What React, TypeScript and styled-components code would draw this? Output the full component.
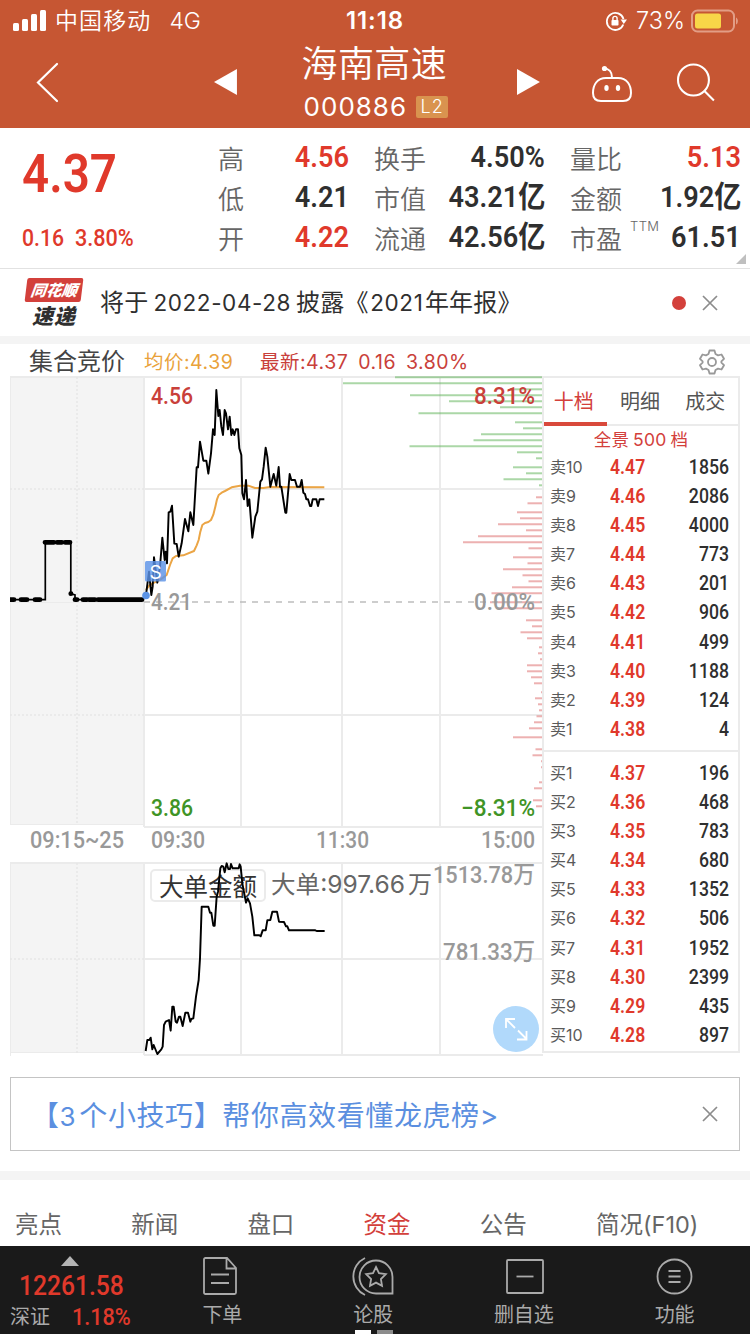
import React from "react";
import styled, { createGlobalStyle } from "styled-components";

const RED = "#e0392b";
const DARK = "#2f2f2f";
const LINE = "#ebebeb";
const CN = `Inter, "Noto Sans CJK SC", sans-serif`;
const DIN = `Roboto, "Noto Sans CJK SC", sans-serif`;

const GlobalStyle = createGlobalStyle`
  * { box-sizing: border-box; }
  body { margin: 0; background: #fff; }
`;

const Page = styled.div`
  width: 750px;
  height: 1334px;
  overflow: hidden;
  display: flex;
  flex-direction: column;
  background: #fff;
  color: ${DARK};
  font-family: ${CN};
  white-space: nowrap;
`;

/* condensed figures used for every quote value */
const Num = styled.span<{ $size: number; $color?: string; $from?: string; $weight?: number; $sx?: number }>`
  display: inline-block;
  font-family: ${DIN};
  font-weight: ${(p) => p.$weight ?? 500};
  font-size: ${(p) => p.$size}px;
  color: ${(p) => p.$color ?? DARK};
  transform: scaleX(${(p) => p.$sx ?? 0.92});
  transform-origin: ${(p) => p.$from ?? "left"} center;
`;

/* ---------- header ---------- */
const Header = styled.header`
  height: 128px;
  flex: none;
  background: #c65633;
  color: #fff;
`;
const StatusBar = styled.div`
  height: 40px;
  display: grid;
  grid-template-columns: 1fr auto 1fr;
  align-items: center;
  padding: 0 11px 0 13px;
  font-size: 23px;
  line-height: 42px;
`;
const Carrier = styled.div`
  display: flex;
  align-items: center;
  gap: 8px;
  letter-spacing: 1.1px;
  font-weight: 350;
`;
const Network = styled.span`
  margin-left: 10px;
  letter-spacing: 0;
`;
const Clock = styled.div`
  padding-right: 2px;
  font-weight: 600;
  font-size: 24px;
  letter-spacing: 0.9px;
`;
const BatteryArea = styled.div`
  display: flex;
  align-items: center;
  justify-content: flex-end;
  gap: 6px;
  font-weight: 350;
`;
const Percent = styled.span`
  margin-left: 3px;
  font-size: 23.5px;
`;
const NavBar = styled.div`
  height: 88px;
  display: flex;
  align-items: center;
  padding: 0 34px 4px 36px;
`;
const Title = styled.div`
  width: 148px;
  margin: 5px 67px 0 64px;
  display: flex;
  flex-direction: column;
  align-items: center;
`;
const StockName = styled.div`
  padding-right: 2px;
  font-size: 36px;
  line-height: 44px;
  letter-spacing: 0.4px;
  font-weight: 350;
`;
const CodeLine = styled.div`
  display: flex;
  align-items: center;
  gap: 9px;
  margin-right: -1px;
  font-size: 26px;
  line-height: 42px;
  letter-spacing: 1px;
`;
const Level = styled.span`
  width: 32px;
  height: 22px;
  margin-top: 1px;
  border-radius: 2px;
  background: #d9934f;
  font-size: 18px;
  font-weight: 350;
  line-height: 22px;
  text-align: center;
`;
const BackSlot = styled.div`
  width: 177px;
  display: flex;
`;
const RobotSlot = styled.div`
  margin: 4px 43px 0 50px;
  display: flex;
`;

/* ---------- quote ---------- */
const Quote = styled.section`
  position: relative;
  height: 141px;
  flex: none;
  display: flex;
  border-bottom: 1px solid #e2e2e2;
`;
const Last = styled.div`
  width: 218px;
  flex: none;
  padding: 16px 0 0 22px;
`;
const LastPrice = styled.div`
  height: 60px;
  line-height: 60px;
`;
const Change = styled.div`
  margin-top: 15px;
  display: flex;
  height: 40px;
  line-height: 40px;
`;
const ChangeValue = styled.div`
  width: 53px;
`;
const Figures = styled.div<{ $w: number }>`
  width: ${(p) => p.$w}px;
  flex: none;
  margin-right: 25px;
  padding-top: 9px;
`;
const Figure = styled.div`
  height: 40px;
  display: flex;
  justify-content: space-between;
  line-height: 40px;
`;
const Label = styled.span`
  font-size: 26px;
  color: #666;
  font-weight: 350;
  padding-top: 3px;
`;
const Ttm = styled.sup`
  display: inline-block;
  vertical-align: top;
  width: 0;
  margin: -14px 0 0 8px;
  font-size: 13px;
  letter-spacing: 0.4px;
`;
const Corner = styled.span`
  position: absolute;
  right: 4px;
  bottom: 4px;
  border: 5px solid transparent;
  border-right-color: #bfbfbf;
  border-bottom-color: #bfbfbf;
`;

/* ---------- notice ---------- */
const Notice = styled.section`
  height: 67px;
  flex: none;
  display: flex;
  align-items: center;
  padding: 0 31px 0 24px;
`;
const Brand = styled.div`
  width: 60px;
  margin-right: 16px;
  display: flex;
  flex-direction: column;
  align-items: center;
  font-family: "Noto Sans CJK SC", sans-serif;
  font-style: italic;
  font-weight: 900;
`;
const BrandTop = styled.div`
  width: 56px;
  height: 24px;
  border-radius: 2px;
  transform: skewX(-7deg);
  background: #d3403b;
  color: #fff;
  font-size: 15.5px;
  line-height: 23px;
  text-align: center;
`;
const BrandBottom = styled.div`
  margin-top: 1px;
  font-size: 21px;
  line-height: 24px;
  letter-spacing: 1px;
`;
const NoticeText = styled.div`
  flex: 1;
  font-size: 24px;
  line-height: 40px;
  letter-spacing: 0.2px;
`;
const Digits = styled.span<{ $gap: number }>`
  margin: 0 ${(p) => p.$gap}px;
  font-size: 22.5px;
  letter-spacing: 0.6px;
`;
const Dot = styled.span`
  width: 14px;
  height: 14px;
  margin-right: 15px;
  border-radius: 50%;
  background: #d3403b;
`;
const Band = styled.div<{ $h: number }>`
  height: ${(p) => p.$h}px;
  flex: none;
  background: #f4f4f4;
`;

/* ---------- chart ---------- */
const ChartHead = styled.div`
  height: 32px;
  flex: none;
  display: flex;
  align-items: center;
  padding: 4px 25px 0 29px;
  font-size: 19.5px;
  line-height: 32px;
`;
const Auction = styled.span`
  width: 115px;
  font-size: 24px;
  color: #444;
`;
const Average = styled.span`
  width: 116px;
  color: #e9a23b;
  letter-spacing: 0.5px;
`;
const Newest = styled.span`
  flex: 1;
  color: #c9403a;
  letter-spacing: 0.5px;
  word-spacing: 4px;
`;
const Market = styled.section`
  height: 701px;
  flex: none;
  display: flex;
  padding-left: 10px;
`;
const ChartWrap = styled.div`
  width: 532px;
  height: 682px;
`;
const Book = styled.aside`
  width: 198px;
  height: 677px;
  border: 2px solid ${LINE};
`;
const BookTabs = styled.div`
  height: 48px;
  display: flex;
  border-bottom: 2px solid ${LINE};
`;
const BookTab = styled.div<{ $on?: boolean }>`
  width: ${(p) => (p.$on ? 64 : 66)}px;
  height: 48px;
  padding-right: ${(p) => (p.$on ? 4 : 0)}px;
  text-align: center;
  font-size: 20px;
  line-height: 48px;
  color: ${(p) => (p.$on ? "#d3403b" : "#555")};
  box-shadow: ${(p) => (p.$on ? "inset 0 -4px #d9493b" : "none")};
`;
const Panorama = styled.div`
  height: 27px;
  text-align: center;
  font-size: 17.5px;
  line-height: 28px;
  letter-spacing: 0.3px;
  word-spacing: -1.5px;
  color: #d3403b;
`;
const Levels = styled.div<{ $rule?: boolean }>`
  padding-bottom: ${(p) => (p.$rule ? 6 : 0)}px;
  margin-bottom: ${(p) => (p.$rule ? 7 : 0)}px;
  border-bottom: ${(p) => (p.$rule ? `2px solid ${LINE}` : "none")};
`;
const LevelRow = styled.div`
  height: 29.1px;
  display: grid;
  grid-template-columns: 60px 50px 1fr;
  padding: 0 9px 0 6px;
  line-height: 29px;
  text-align: right;
`;
const Side = styled.span`
  font-size: 16px;
  color: #5a5a5a;
  text-align: left;
`;
const PriceCell = styled.span`
  text-align: left;
`;

/* ---------- lower area ---------- */
const Banner = styled.section`
  height: 74px;
  flex: none;
  margin: 0 10px 20px;
  padding: 0 20px 0 20px;
  display: flex;
  align-items: center;
  justify-content: space-between;
  border: 1px solid #c4c4c4;
  color: #5b8fe0;
  font-size: 28px;
  letter-spacing: 0.6px;
`;
const BannerDigit = styled.span`
  margin: 0 3px 0 0;
  font-size: 26px;
`;
const Tabs = styled.nav`
  height: 66px;
  flex: none;
  display: flex;
  padding: 12px 0 0 15px;
  line-height: 66px;
  font-size: 23.5px;
`;
const Tab = styled.span<{ $on?: boolean }>`
  width: 116.2px;
  color: ${(p) => (p.$on ? "#d3403b" : "#666")};
`;
const Footer = styled.footer`
  position: relative;
  height: 88px;
  flex: none;
  display: flex;
  background: #1a1a1a;
  color: #aaa;
`;
const IndexBox = styled.div`
  width: 147px;
  padding: 10px 0 0 10px;
`;
const IndexArrow = styled.div`
  width: 0;
  margin-left: 51px;
  border: 9px solid transparent;
  border-top: 0;
  border-bottom: 10px solid #b4b4b4;
`;
const IndexValue = styled.div`
  height: 34px;
  margin: 3px 0 0 9px;
  line-height: 34px;
`;
const IndexRow = styled.div`
  display: flex;
  gap: 22px;
  font-size: 20px;
  line-height: 28px;
`;
const Action = styled.div`
  flex: 1;
  display: flex;
  flex-direction: column;
  align-items: center;
  padding-top: 9px;
  font-size: 20px;
  line-height: 30px;
`;
const ActionIcon = styled.svg`
  width: 44px;
  height: 42px;
  margin-bottom: 3px;
  fill: none;
  stroke: #aaa;
  stroke-width: 1.8;
`;
const Pager = styled.div`
  position: absolute;
  left: 355px;
  bottom: 0;
  display: flex;
  gap: 6px;
`;
const PagerDot = styled.span<{ $on?: boolean }>`
  width: 16px;
  height: 4px;
  background: ${(p) => (p.$on ? "#fff" : "#8c8c8c")};
`;

const Cross = () => (
  <svg width="18" height="18" viewBox="0 0 18 18" stroke="#8c8c8c" strokeWidth="1.7" fill="none">
    <path d="M2 2L16 16M16 2L2 16" />
  </svg>
);

const figures: { w: number; rows: [React.ReactNode, string, boolean][] }[] = [
  { w: 131, rows: [["高", "4.56", true], ["低", "4.21", false], ["开", "4.22", true]] },
  { w: 171, rows: [["换手", "4.50%", false], ["市值", "43.21亿", false], ["流通", "42.56亿", false]] },
  { w: 171, rows: [["量比", "5.13", true], ["金额", "1.92亿", false], [<>市盈<Ttm>TTM</Ttm></>, "61.51", false]] },
];

const sells: [string, string, string][] = [
  ["卖10", "4.47", "1856"], ["卖9", "4.46", "2086"], ["卖8", "4.45", "4000"], ["卖7", "4.44", "773"],
  ["卖6", "4.43", "201"], ["卖5", "4.42", "906"], ["卖4", "4.41", "499"], ["卖3", "4.40", "1188"],
  ["卖2", "4.39", "124"], ["卖1", "4.38", "4"],
];
const buys: [string, string, string][] = [
  ["买1", "4.37", "196"], ["买2", "4.36", "468"], ["买3", "4.35", "783"], ["买4", "4.34", "680"],
  ["买5", "4.33", "1352"], ["买6", "4.32", "506"], ["买7", "4.31", "1952"], ["买8", "4.30", "2399"],
  ["买9", "4.29", "435"], ["买10", "4.28", "897"],
];

/* resting orders by price level: [y, left edge] in chart units */
const greenBars = [
  [377.3, 395], [383.3, 343], [389.3, 510], [395.3, 410], [401.3, 449], [407.3, 500], [413.3, 418.5],
  [422.3, 515], [428.3, 523], [434.3, 481], [440.3, 473.5], [446.3, 409.5], [452.3, 517], [458.3, 536],
  [467.3, 513], [473.3, 526], [479.3, 503.5], [485.3, 539],
];
const redBars = [
  [497.3, 536], [503.3, 527.5], [512.3, 517], [518.3, 520], [524.3, 498], [530.3, 526], [536.3, 478],
  [542.3, 463], [548.3, 528.5], [557.3, 513], [563.3, 527.5], [569.3, 503], [575.3, 522.5], [581.3, 528.5],
  [587.3, 512], [593.3, 491.5], [602.3, 490], [608.3, 497], [620.3, 526], [626.3, 532], [632.3, 520.5],
  [638.3, 527], [647.3, 539], [653.3, 538], [659.3, 540], [665.3, 527], [671.3, 527], [677.3, 531],
  [683.3, 534], [692.3, 541], [698.3, 535], [704.3, 538], [710.3, 539], [716.3, 536.5], [722.3, 534],
  [728.3, 529], [737.3, 513], [749.3, 535.5], [755.3, 532.5], [761.3, 541], [767.3, 541], [782.3, 539],
  [788.3, 534], [800.3, 533], [806.3, 536],
];

const pricePts =
  "18,675 27,605 34,675 38,650 42,562 52,638 60,590 67,503 74,570 77,545 81,580 86,427 91,425 96,407 103,521 110,522 116,560 125,520 135,447 145,484 151,427 160,465 170,292 174,292 180,215 190,272 199,272 205,311 213,250 219,178 224,195 229,60 235,138 239,120 244,170 249,195 254,120 258,130 264,178 269,140 274,195 278,178 283,195 288,178 294,178 298,235 304,255 307,370 312,388 318,330 323,408 328,388 337,503 346,440 352,425 361,335 366,328 371,290 377,233 382,260 391,350 401,312 409,347 416,291 420,350 424,350 436,428 439,428 449,312 454,330 465,330 471,350 480,350 485,330 490,368 495,372 499,388 504,388 510,408 514,408 518,388 529,388 534,408 539,388 553,388";
const averagePts =
  "18,660 28,646 42,638 62,628 80,615 90,585 98,565 108,558 130,556 162,543 170,526 176,510 181,485 187,465 195,459 205,456 213,450 220,434 226,410 231,388 236,375 245,368 255,363 275,352 300,347 325,347 345,354 370,354 390,351 553,352";
const flowPts =
  "437,693 442,660 448,660 452,653 457,688 461,675 472,702 484,688 488,680 492,615 497,605 507,600 512,632 517,560 521,560 527,605 531,608 537,590 541,590 548,618 556,578 564,578 571,605 574,597 580,595 588,530 596,480 600,415 605,260 625,260 630,278 634,278 640,317 644,317 650,230 654,215 661,145 665,138 670,140 674,157 680,130 685,147 690,147 693,132 698,145 716,145 719,133 722,140 727,190 738,248 743,235 750,250 757,290 763,346 778,346 782,349 788,331 797,331 802,301 811,300 817,275 831,275 837,305 852,306 858,319 862,319 867,331 946,331 950,333 974,333";

type AxisProps = { x: number; y: number; w: number; fill: string; size?: number; weight?: number; family?: string; children: React.ReactNode };
const Axis = ({ x, y, w, fill, size = 23.5, weight = 500, family = DIN, children }: AxisProps) => (
  <text x={x} y={y} fill={fill} fontSize={size} fontWeight={weight} fontFamily={family} textLength={w} lengthAdjust="spacingAndGlyphs">
    {children}
  </text>
);

const Chart = () => (
  <svg width="534" height="682" viewBox="10 376 534 682">
    <rect x="10" y="377" width="134" height="448" fill="#f4f4f4" />
    <rect x="10" y="863" width="134" height="190" fill="#f4f4f4" />
    <g stroke={LINE} strokeWidth="2" fill="none">
      <path d="M10 377H543M144 489H543M144 715H543M144 827H543M144 377V827M241 377V827M342 377V827M440 377V827" />
      <path d="M10 863H543M144 959H543M144 1055H543M144 863V1055M241 863V1055M342 863V1055M440 863V1055" />
      <path d="M10.5 377V825M10.5 863V1056M10 824.5H144M10 1052.5H144M10 602.5H144" strokeWidth="1" />
      <path d="M77 377V825M10 489H144M10 715H144M77 863V1053M10 959H144" strokeDasharray="2 2" strokeWidth="1.5" stroke="#e6e6e6" />
    </g>
    {greenBars.map(([y, x]) => (
      <path key={y} d={`M${x} ${y}H542`} stroke="#57b04f" strokeOpacity=".5" strokeWidth="2" />
    ))}
    {redBars.map(([y, x]) => (
      <path key={y} d={`M${x} ${y}H542`} stroke="#dc6464" strokeOpacity=".5" strokeWidth="2" />
    ))}
    <path d="M144 602H543" stroke="#bdbdbd" strokeWidth="1.6" strokeDasharray="6 6" />

    <path d="M10 599.7H45.3V542.3H70.8V593.7L75 595V599.7H143" fill="none" stroke="#000" strokeWidth="1.7" />
    <path d="M10 599.7H14M21 599.7H27M35 599.7H40M45 542.3H54M57 542.3H62M65 542.3H70M75 599.7H77M83 599.7H87M89 599.7H95M98 599.7H142M70.8 593.7H71" stroke="#000" strokeWidth="4.8" strokeLinecap="round" />

    <g transform="translate(140 370) scale(.33333)" fill="none" strokeLinejoin="round">
      <polyline points={averagePts} stroke="#eba545" strokeWidth="6" />
      <polyline points={pricePts} stroke="#000" strokeWidth="5.8" />
    </g>
    <circle cx="146" cy="595.5" r="3.8" fill="#5b93e6" />
    <rect x="145" y="561" width="21" height="20.5" rx="1.5" fill="#5b93e6" fillOpacity=".82" />
    <text x="155.5" y="578.5" fontSize="19" fontFamily={CN} fill="#fff" textAnchor="middle">S</text>

    <Axis x={151} y={404} w={42} fill="#c9403a" weight={550}>4.56</Axis>
    <Axis x={151} y={610} w={41} fill="#999">4.21</Axis>
    <Axis x={151} y={816} w={42} fill="#3f9426" weight={550}>3.86</Axis>
    <Axis x={474} y={404} w={61} fill="#c9403a">8.31%</Axis>
    <Axis x={474} y={610} w={61} fill="#999">0.00%</Axis>
    <Axis x={461} y={816} w={74} fill="#3f9426">−8.31%</Axis>
    <Axis x={30} y={848} w={94} fill="#999">09:15~25</Axis>
    <Axis x={151} y={848} w={54} fill="#999">09:30</Axis>
    <Axis x={316} y={848} w={53} fill="#999">11:30</Axis>
    <Axis x={481} y={848} w={54} fill="#999">15:00</Axis>

    <rect x="151" y="870" width="114" height="31" rx="4" fill="#fff" stroke={LINE} strokeWidth="2" />
    <Axis x={159} y={896} w={98} fill="#333" size={24.5} weight={400} family={CN}>大单金额</Axis>
    <Axis x={271} y={893} w={134} fill="#666" size={24} weight={400} family={CN}>大单:997.66</Axis>
    <Axis x={408} y={893} w={24} fill="#666" size={24} weight={400} family={CN}>万</Axis>
    <Axis x={433} y={883} w={102} fill="#999">1513.78万</Axis>
    <Axis x={443} y={960} w={92} fill="#999">781.33万</Axis>
    <polyline transform="translate(0 820) scale(.33333)" points={flowPts} fill="none" stroke="#000" strokeWidth="5.8" strokeLinejoin="round" />

    <circle cx="516" cy="1029" r="23" fill="#b1d9fb" />
    <path d="M506 1028V1019H515M506 1019L515 1028M518 1030.500L526.500 1039M526.500 1031V1039.500H517" fill="none" stroke="#fff" strokeWidth="1.8" />
  </svg>
);

const Rows = ({ data }: { data: [string, string, string][] }) => (
  <>
    {data.map(([side, price, vol]) => (
      <LevelRow key={side}>
        <Side>{side}</Side>
        <PriceCell><Num $size={19.5} $color={RED} $weight={600} $sx={0.905}>{price}</Num></PriceCell>
        <Num $size={19.5} $from="right" $sx={0.905}>{vol}</Num>
      </LevelRow>
    ))}
  </>
);

export default function App() {
  return (
    <Page>
      <GlobalStyle />
      <Header>
        <StatusBar>
          <Carrier>
            <svg width="34" height="22" viewBox="0 0 34 22" fill="#fff">
              <rect x="0" y="13" width="6" height="8" rx="1.5" />
              <rect x="9" y="9" width="6" height="12" rx="1.5" />
              <rect x="18" y="4" width="6" height="17" rx="1.5" />
              <rect x="27" y="0" width="6" height="21" rx="1.5" />
            </svg>
            中国移动
            <Network>4G</Network>
          </Carrier>
          <Clock>11:18</Clock>
          <BatteryArea>
            <svg width="22" height="20" viewBox="0 0 22 20" fill="none" stroke="#fff" strokeWidth="1.8">
              <path d="M18.300 13.500A8.500 8.500 0 1 1 18.500 8" />
              <path d="M15.600 8.500H22L18.800 13Z" fill="#fff" stroke="none" />
              <rect x="6.500" y="9" width="7" height="5.500" rx=".8" fill="#fff" stroke="none" />
              <path d="M7.900 9V7.500A2.100 2.100 0 0 1 12.100 7.500V9" strokeWidth="1.400" />
            </svg>
            <Percent>73%</Percent>
            <svg width="48" height="24" viewBox="0 0 48 24">
              <rect x="1" y="1.500" width="42" height="21" rx="5.500" fill="none" stroke="#e29d86" strokeWidth="2" />
              <rect x="4" y="4.500" width="26" height="15" rx="2.500" fill="#f8d648" />
              <path d="M45 8.500C47.500 9.500 47.500 14.500 45 15.500Z" fill="#e29d86" />
            </svg>
          </BatteryArea>
        </StatusBar>
        <NavBar>
          <BackSlot>
            <svg width="24" height="42" viewBox="0 0 24 42" fill="none" stroke="#fff" strokeWidth="2.200" strokeLinecap="round">
              <path d="M21 3L2 21.500L21 40" />
            </svg>
          </BackSlot>
          <svg width="25" height="26" viewBox="0 0 25 26" fill="#fff"><path d="M24 0V26L1 13Z" /></svg>
          <Title>
            <StockName>海南高速</StockName>
            <CodeLine>000886<Level>L2</Level></CodeLine>
          </Title>
          <svg width="25" height="26" viewBox="0 0 25 26" fill="#fff"><path d="M1 0V26L24 13Z" /></svg>
          <RobotSlot>
            <svg width="42" height="38" viewBox="0 0 42 38" fill="none" stroke="#fff" strokeWidth="2">
              <path d="M15 13H27C36 13 40 20 40 28C40 34 37 36 32 36H10C5 36 2 34 2 28C2 20 6 13 15 13Z" />
              <path d="M13 3.500C18 3.500 21 7 21 12.500" />
              <circle cx="13.500" cy="3.500" r="2.600" fill="#fff" stroke="none" />
              <ellipse cx="15.500" cy="23" rx="2.200" ry="3" fill="#fff" stroke="none" />
              <ellipse cx="27" cy="23" rx="2.200" ry="3" fill="#fff" stroke="none" />
            </svg>
          </RobotSlot>
          <svg width="40" height="40" viewBox="0 0 40 40" fill="none" stroke="#fff" strokeWidth="2.100">
            <circle cx="17.500" cy="18" r="15.500" />
            <path d="M28 28.500L38 38.500" />
          </svg>
        </NavBar>
      </Header>

      <Quote>
        <Last>
          <LastPrice><Num $size={54} $color={RED} $weight={600} $sx={0.88}>4.37</Num></LastPrice>
          <Change>
            <ChangeValue><Num $size={23} $color={RED}>0.16</Num></ChangeValue>
            <Num $size={23} $color={RED} $sx={0.94}>3.80%</Num>
          </Change>
        </Last>
        {figures.map((col, i) => (
          <Figures key={i} $w={col.w}>
            {col.rows.map(([label, value, up]) => (
              <Figure key={value}>
                <Label>{label}</Label>
                <Num $size={29.5} $color={up ? RED : DARK} $weight={570} $from="right">{value}</Num>
              </Figure>
            ))}
          </Figures>
        ))}
        <Corner />
      </Quote>

      <Notice>
        <Brand>
          <BrandTop>同花顺</BrandTop>
          <BrandBottom>速递</BrandBottom>
        </Brand>
        <NoticeText>
          将于<Digits $gap={5}>2022-04-28</Digits>披露《<Digits $gap={1.5}>2021</Digits>年年报》
        </NoticeText>
        <Dot />
        <Cross />
      </Notice>
      <Band $h={8} />

      <ChartHead>
        <Auction>集合竞价</Auction>
        <Average>均价:4.39</Average>
        <Newest>最新:4.37 0.16 3.80%</Newest>
        <svg width="26" height="26" viewBox="0 0 26 26" fill="none" stroke="#999" strokeWidth="1.800" strokeLinejoin="round">
          <path d="M10.500 1.500H15.500L16.500 5L19 6.400L22.500 5.500L25 9.800L22.400 12.300V13.700L25 16.200L22.500 20.500L19 19.600L16.500 21L15.500 24.500H10.500L9.500 21L7 19.600L3.500 20.500L1 16.200L3.600 13.700V12.300L1 9.800L3.500 5.500L7 6.400L9.500 5Z" />
          <circle cx="13" cy="13" r="4" />
        </svg>
      </ChartHead>

      <Market>
        <ChartWrap><Chart /></ChartWrap>
        <Book>
          <BookTabs>
            <BookTab $on>十档</BookTab>
            <BookTab>明细</BookTab>
            <BookTab>成交</BookTab>
          </BookTabs>
          <Panorama>全景 500 档</Panorama>
          <Levels $rule><Rows data={sells} /></Levels>
          <Levels><Rows data={buys} /></Levels>
        </Book>
      </Market>

      <Banner>
        <span>【<BannerDigit>3</BannerDigit>个小技巧】帮你高效看懂龙虎榜&gt;</span>
        <Cross />
      </Banner>
      <Band $h={9} />

      <Tabs>
        <Tab>亮点</Tab>
        <Tab>新闻</Tab>
        <Tab>盘口</Tab>
        <Tab $on>资金</Tab>
        <Tab>公告</Tab>
        <Tab>简况(F10)</Tab>
      </Tabs>

      <Footer>
        <IndexBox>
          <IndexArrow />
          <IndexValue><Num $size={28} $color={RED} $sx={0.88}>12261.58</Num></IndexValue>
          <IndexRow>
            <span>深证</span>
            <Num $size={23.5} $color={RED}>1.18%</Num>
          </IndexRow>
        </IndexBox>
        <Action>
          <ActionIcon viewBox="0 0 44 42">
            <path d="M4 4.500Q4 3 5.500 3H27L36 13V37.500Q36 39 34.500 39H5.500Q4 39 4 37.500ZM26.500 3V13.500H36M11 19.500H29M11 28H29" />
          </ActionIcon>
          下单
        </Action>
        <Action>
          <ActionIcon viewBox="0 0 44 42">
            <path d="M25 5.500A16.500 16.500 0 1 0 25 38.500H41.500V22A16.500 16.500 0 0 0 25 5.500Z" />
            <path d="M14 3A20.500 20.500 0 0 0 14 40" />
            <path d="M25 12L28 18.200L34.800 19.200L29.900 24L31 30.800L25 27.600L19 30.800L20.100 24L15.200 19.200L22 18.200Z" />
          </ActionIcon>
          论股
        </Action>
        <Action>
          <ActionIcon viewBox="0 0 44 42">
            <rect x="5" y="5" width="36" height="33" rx="1" />
            <path d="M14.500 21.500H31.500" />
          </ActionIcon>
          删自选
        </Action>
        <Action>
          <ActionIcon viewBox="0 0 44 42">
            <circle cx="21.500" cy="21.500" r="17" />
            <path d="M15.500 16H27.500M15.500 21.500H27.500M15.500 27H27.500" />
          </ActionIcon>
          功能
        </Action>
        <Pager>
          <PagerDot $on />
          <PagerDot />
        </Pager>
      </Footer>
    </Page>
  );
}
